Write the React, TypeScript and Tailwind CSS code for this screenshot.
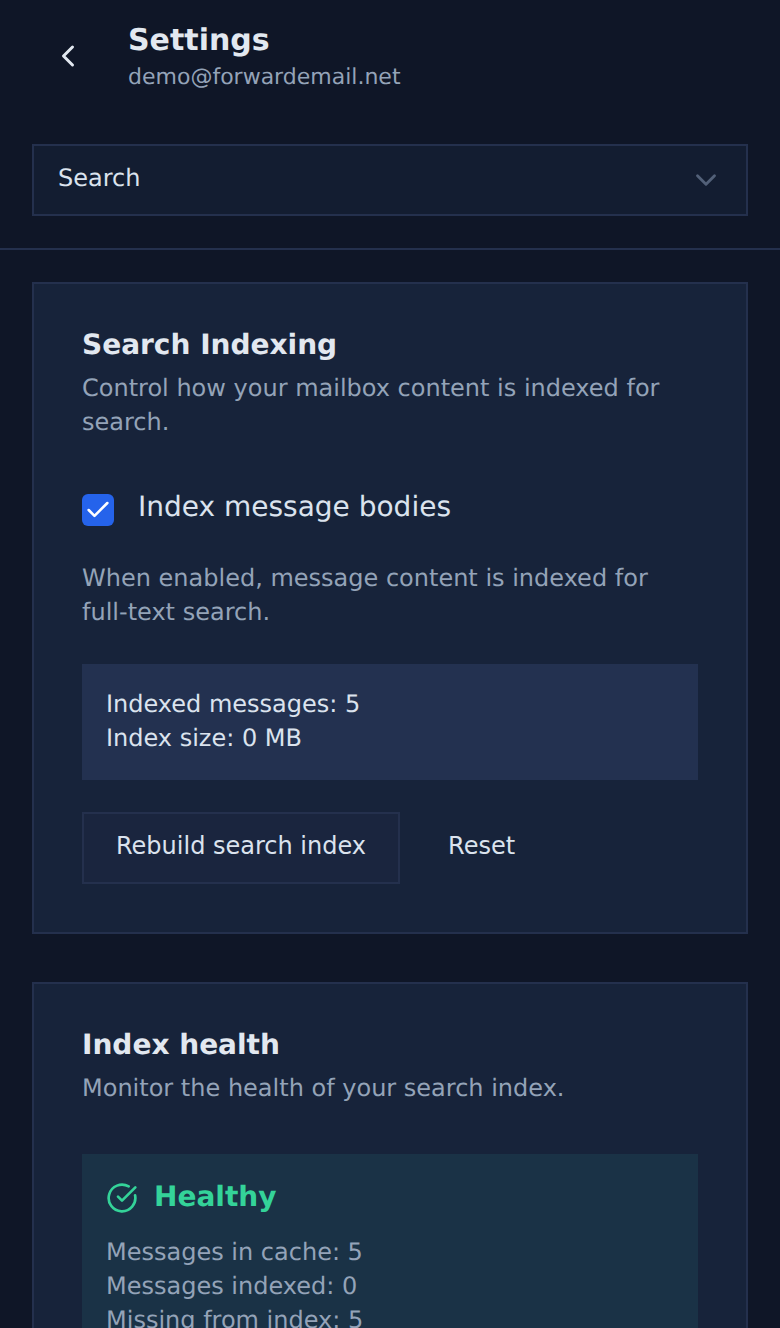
import { ChevronLeft, ChevronDown, Check, CircleCheckBig } from 'lucide-react';

export default function App() {
  return (
    <div className="h-[1328px] overflow-hidden bg-[#0f1627] font-['DejaVu_Sans',sans-serif] text-[#dbe3ee] [text-rendering:geometricPrecision]">
      <header className="flex items-start gap-[24px] pl-[48px] pt-[20px] h-[112px]">
        <button className="w-[40px] h-[72px] flex items-center justify-center text-[#e2e8f0]">
          <ChevronLeft size={36} strokeWidth={2} />
        </button>
        <div className="pl-[16px] pt-[1px]">
          <h1 className="text-[30px] leading-[40px] font-bold text-[#e2e8f0]">Settings</h1>
          <p className="text-[22px] leading-[34px] text-[#94a3b8]">demo@forwardemail.net</p>
        </div>
      </header>

      <div className="px-[32px] pt-[32px] pb-[32px] border-b-2 border-[#24304d]">
        <div className="h-[72px] flex items-center justify-between pl-[24px] pr-[23px] bg-[#131d31] border-2 border-[#24304d] text-[24px]">
          <span className="mb-[4px]">Search</span>
          <ChevronDown size={34} strokeWidth={2} className="text-[#526078]" />
        </div>
      </div>

      <main className="px-[32px] pt-[32px] flex flex-col gap-[48px]">
        <section className="bg-[#17233a] border-2 border-[#24304d] p-[48px]">
          <h2 className="text-[28px] leading-[26px] mb-[13px] font-bold text-[#e2e8f0]">Search Indexing</h2>
          <p className="text-[24px] leading-[34px] text-[#94a3b8]">Control how your mailbox content is indexed for search.</p>

          <label className="flex items-start gap-[24px] mt-[48px]">
            <span className="w-[32px] h-[32px] mt-[7px] rounded-[6px] bg-[#2563eb] flex items-center justify-center text-white">
              <Check size={28} strokeWidth={2.2} />
            </span>
            <span className="text-[28px] leading-[40px]">Index message bodies</span>
          </label>

          <p className="text-[24px] leading-[34px] text-[#94a3b8] mt-[34px]">When enabled, message content is indexed for full-text search.</p>

          <div className="mt-[35px] bg-[#233150] px-[24px] pt-[23px] pb-[25px] text-[24px] leading-[34px]">
            <div>Indexed messages: 5</div>
            <div>Index size: 0 MB</div>
          </div>

          <div className="flex items-center gap-[16px] mt-[32px]">
            <button className="h-[72px] px-[32px] pb-[4px] bg-[#1a253e] border-2 border-[#24304d] text-[24px]">Rebuild search index</button>
            <button className="h-[72px] px-[32px] pb-[4px] text-[24px]">Reset</button>
          </div>
        </section>

        <section className="bg-[#17233a] border-2 border-[#24304d] p-[48px]">
          <h2 className="text-[28px] leading-[26px] mb-[13px] font-bold text-[#e2e8f0]">Index health</h2>
          <p className="text-[24px] leading-[34px] text-[#94a3b8]">Monitor the health of your search index.</p>

          <div className="mt-[49px] bg-[#1a3246] p-[24px]">
            <div className="flex items-center gap-[16px] h-[36px] mt-[1px]">
              <CircleCheckBig size={32} className="text-[#34d399] mt-[2px]" />
              <span className="text-[28px] font-bold text-[#34d399]">Healthy</span>
            </div>
            <div className="mt-[20px] text-[24px] leading-[34px] text-[#94a3b8]">
              <div>Messages in cache: 5</div>
              <div>Messages indexed: 0</div>
              <div>Missing from index: 5</div>
            </div>
          </div>
        </section>
      </main>
    </div>
  );
}
